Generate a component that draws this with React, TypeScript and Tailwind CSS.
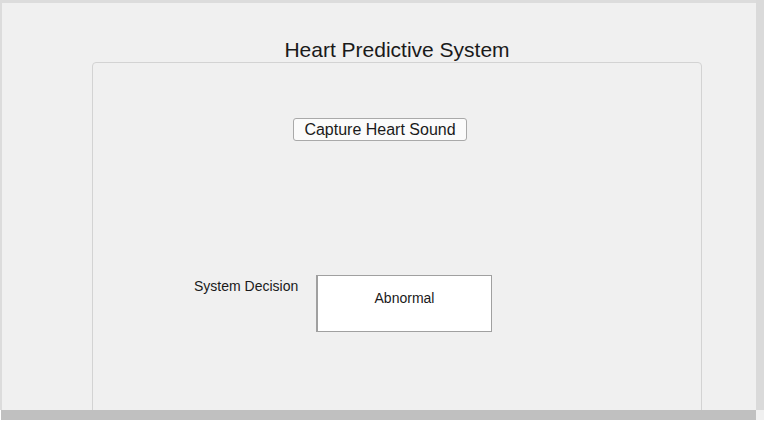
const App = () => {
  return (
    <div
      className="w-[769px] h-[428px] bg-white overflow-hidden"
      style={{ fontFamily: '"Liberation Sans", Arial, sans-serif' }}
    >
      <div className="flex h-[410px]">
        {/* main figure area */}
        <div className="w-[756px] h-full bg-[#f0f0f0] border-t-[3px] border-l-2 border-[#dcdcdc] overflow-hidden">
          <div className="pl-[90px] pt-[35px] w-[700px]">
            <h1 className="h-[24px] text-center text-[21px] leading-[24px] text-[#1a1a1a]">
              Heart Predictive System
            </h1>
            <div className="h-[400px] border border-[#d3d3d3] rounded-[4px] pt-[55px]">
              <div className="ml-[200px] w-[174px]">
                <button className="w-[174px] h-[23px] bg-[#fbfbfb] border border-[#a9a9a9] rounded-[3px] text-[16px] leading-[19px] text-[#1a1a1a]">
                  Capture Heart Sound
                </button>
              </div>
              <div className="flex mt-[133px] ml-[101px]">
                <div className="w-[122px] pt-[3px] text-[14px] leading-[16px] text-[#1a1a1a]">
                  System Decision
                </div>
                <div className="w-[176px] h-[57px] bg-white border border-[#a0a0a0] border-l-2 pt-[14px] text-center text-[14px] leading-[16px] text-[#1a1a1a]">
                  Abnormal
                </div>
              </div>
            </div>
          </div>
        </div>
        <div className="w-[8px] h-full bg-[#dadada]" />
      </div>
      <div className="flex">
        <div className="ml-[1px] w-[755px] h-[10px] bg-[#c0c0c0]" />
        <div className="w-[8px] h-[10px] bg-[#f0f0f0]" />
      </div>
    </div>
  );
};

export default App;
